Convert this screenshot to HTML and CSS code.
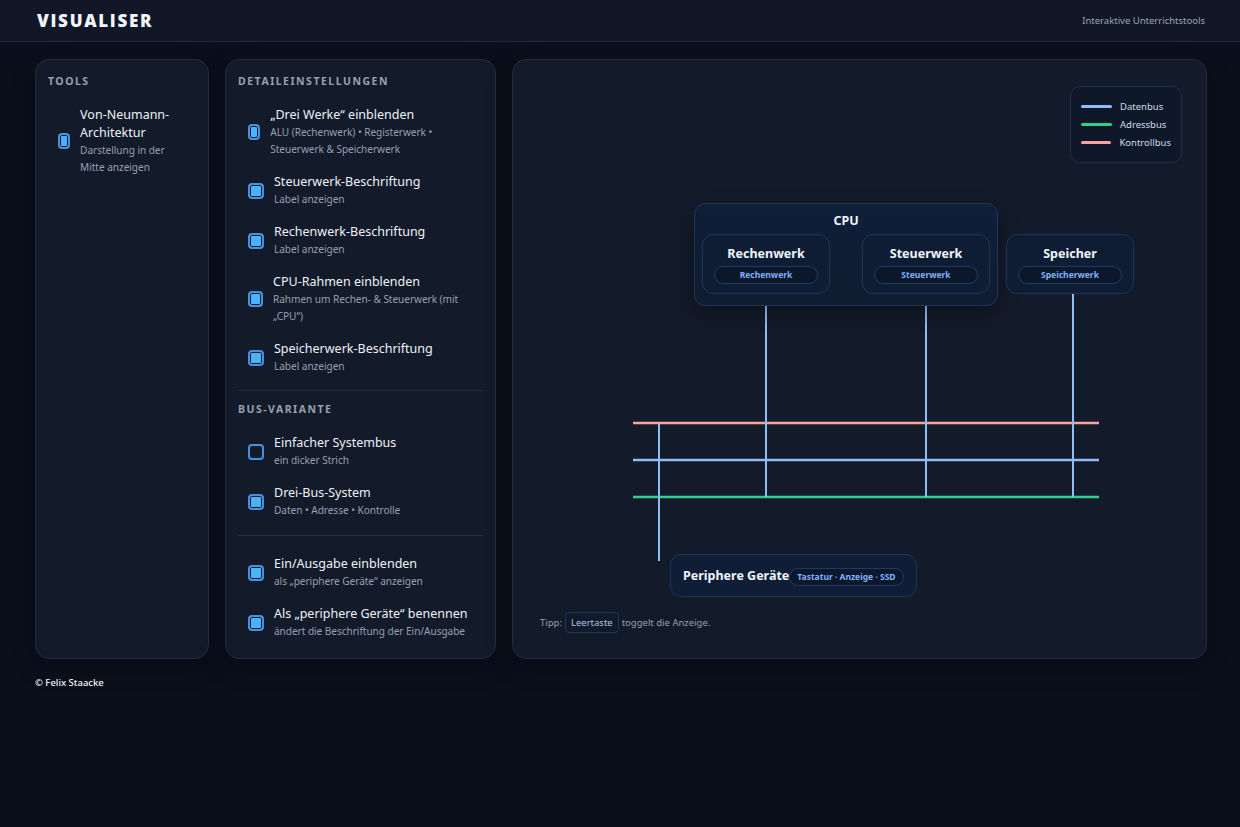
FILE: index.html
```html
<!DOCTYPE html>
<html lang="de">
<head>
<meta charset="utf-8">
<title>Visualiser</title>
<link rel="stylesheet" href="styles.css">
</head>
<body>
<header class="topbar">
  <div class="brand">VISUALISER</div>
  <div class="tagline">Interaktive Unterrichtstools</div>
</header>
<main class="layout">
  <section class="panel">
    <h2 class="panel-heading">Tools</h2>
    <label class="opt">
      <input type="checkbox" class="box" checked>
      <span class="opt-text"><span class="opt-title">Von-Neumann-Architektur</span><span class="opt-desc">Darstellung in der Mitte anzeigen</span></span>
    </label>
  </section>

  <section class="panel">
    <h2 class="panel-heading">Detaileinstellungen</h2>
    <label class="opt">
      <input type="checkbox" class="box" checked>
      <span class="opt-text"><span class="opt-title">„Drei Werke“ einblenden</span><span class="opt-desc">ALU (Rechenwerk) • Registerwerk • Steuerwerk &amp; Speicherwerk</span></span>
    </label>
    <label class="opt">
      <input type="checkbox" class="box" checked>
      <span class="opt-text"><span class="opt-title">Steuerwerk-Beschriftung</span><span class="opt-desc">Label anzeigen</span></span>
    </label>
    <label class="opt">
      <input type="checkbox" class="box" checked>
      <span class="opt-text"><span class="opt-title">Rechenwerk-Beschriftung</span><span class="opt-desc">Label anzeigen</span></span>
    </label>
    <label class="opt">
      <input type="checkbox" class="box" checked>
      <span class="opt-text"><span class="opt-title">CPU-Rahmen einblenden</span><span class="opt-desc">Rahmen um Rechen- &amp; Steuerwerk (mit „CPU“)</span></span>
    </label>
    <label class="opt">
      <input type="checkbox" class="box" checked>
      <span class="opt-text"><span class="opt-title">Speicherwerk-Beschriftung</span><span class="opt-desc">Label anzeigen</span></span>
    </label>

    <hr class="divider">
    <h2 class="panel-heading">Bus-Variante</h2>
    <label class="opt">
      <input type="checkbox" class="box">
      <span class="opt-text"><span class="opt-title">Einfacher Systembus</span><span class="opt-desc">ein dicker Strich</span></span>
    </label>
    <label class="opt">
      <input type="checkbox" class="box" checked>
      <span class="opt-text"><span class="opt-title">Drei-Bus-System</span><span class="opt-desc">Daten • Adresse • Kontrolle</span></span>
    </label>

    <hr class="divider divider-tight">
    <label class="opt">
      <input type="checkbox" class="box" checked>
      <span class="opt-text"><span class="opt-title">Ein/Ausgabe einblenden</span><span class="opt-desc">als „periphere Geräte“ anzeigen</span></span>
    </label>
    <label class="opt">
      <input type="checkbox" class="box" checked>
      <span class="opt-text"><span class="opt-title">Als „periphere Geräte“ benennen</span><span class="opt-desc">ändert die Beschriftung der Ein/Ausgabe</span></span>
    </label>
  </section>

  <section class="panel stage-panel">
    <div class="stage">
      <svg class="wires" width="693" height="520" viewBox="0 0 693 520">
        <g stroke-width="2.5" stroke-linecap="butt">
          <line x1="120" y1="363" x2="586" y2="363" stroke="#f7a3a3"/>
          <line x1="120" y1="400" x2="586" y2="400" stroke="#90bdf5"/>
          <line x1="120" y1="437" x2="586" y2="437" stroke="#2fcf8f"/>
        </g>
        <g stroke="#90bdf5" stroke-width="2">
          <line x1="253" y1="245" x2="253" y2="437"/>
          <line x1="413" y1="245" x2="413" y2="437"/>
          <line x1="560" y1="233" x2="560" y2="437"/>
          <line x1="146" y1="364" x2="146" y2="501"/>
        </g>
      </svg>

      <div class="legend">
        <div class="legend-row"><span class="swatch sw-data"></span>Datenbus</div>
        <div class="legend-row"><span class="swatch sw-addr"></span>Adressbus</div>
        <div class="legend-row"><span class="swatch sw-ctrl"></span>Kontrollbus</div>
      </div>

      <div class="node cpu">
        <div class="cpu-label">CPU</div>
      </div>
      <div class="node unit unit-alu">
        <div class="unit-title">Rechenwerk</div>
        <div class="pill">Rechenwerk</div>
      </div>
      <div class="node unit unit-cu">
        <div class="unit-title">Steuerwerk</div>
        <div class="pill">Steuerwerk</div>
      </div>
      <div class="node unit unit-mem">
        <div class="unit-title">Speicher</div>
        <div class="pill">Speicherwerk</div>
      </div>
      <div class="node periph">
        <span class="periph-title">Periphere Geräte</span>
        <span class="pill pill-inline">Tastatur · Anzeige · SSD</span>
      </div>
    </div>
    <p class="tip">Tipp: <kbd class="key">Leertaste</kbd> toggelt die Anzeige.</p>
  </section>
</main>
<footer class="footer">© Felix Staacke</footer>
</body>
</html>
```

FILE: styles.css
```css
* { box-sizing: border-box; }
html, body { margin: 0; padding: 0; }
body {
  background: #0b0f1b;
  color: #e5e9f2;
  font-family: "Noto Sans", "Open Sans", "Liberation Sans", sans-serif;
  min-height: 827px;
}

.topbar {
  height: 42px;
  display: flex;
  align-items: center;
  justify-content: space-between;
  padding: 0 35px 0 37px;
  background: #111727;
  border-bottom: 1px solid #1f2a3d;
}
.brand {
  font-family: "Open Sans", "Noto Sans", sans-serif;
  font-weight: 800;
  font-size: 17px;
  letter-spacing: 1.7px;
  color: #f1f4fa;
}
.tagline {
  font-size: 9.5px;
  color: #9aa6b8;
}

.layout {
  display: grid;
  grid-template-columns: 174px 271px 1fr;
  grid-template-rows: 600px;
  gap: 16px;
  padding: 17px 33px 0 35px;
}

.panel {
  background: #131a29;
  border: 1px solid #212c40;
  border-radius: 14px;
  padding: 14px 12px 13px 12px;
  display: flex;
  flex-direction: column;
  box-shadow: 0 8px 24px rgba(0,0,0,0.25);
  overflow: hidden;
}

.panel-heading {
  margin: 0 0 10px 0;
  font-size: 10.5px;
  line-height: 14px;
  font-weight: 700;
  letter-spacing: 1.5px;
  text-transform: uppercase;
  color: #97a1b1;
}

.opt {
  display: flex;
  align-items: center;
  gap: 10px;
  padding: 8px 10px 7px 10px;
  cursor: pointer;
}
.box {
  appearance: none;
  -webkit-appearance: none;
  margin: 0;
  width: 16px;
  height: 16px;
  border: 2px solid #4a90e0;
  border-radius: 4px;
  background: transparent;
  flex: 0 1 16px;
  min-width: 11px;
}
.box:checked {
  background: #4ab3ff;
  box-shadow: inset 0 0 0 1px #131a29;
}
.opt-text {
  display: flex;
  flex-direction: column;
  min-width: 0;
}
.opt-title {
  font-size: 12.5px;
  line-height: 18px;
  color: #eef2f8;
}
.opt-desc {
  font-size: 10.1px;
  line-height: 17px;
  color: #95a0b3;
  letter-spacing: -0.05px;
}

.divider {
  border: 0;
  border-top: 1px solid #222d42;
  margin: 8px 0 11px 0;
  height: 0;
}
.divider-tight { margin: 9px 0 11px 0; }

.stage-panel {
  padding: 0 0 25px 27px;
  position: relative;
}
.stage {
  position: relative;
  height: 540px;
  flex: 0 0 auto;
  margin-left: -27px;
}
.wires {
  position: absolute;
  left: 0;
  top: 0;
}

.legend {
  position: absolute;
  left: 557px;
  top: 26px;
  width: 112px;
  height: 77px;
  padding: 11px 10px;
  background: #0e1829;
  border: 1px solid #1d3050;
  border-radius: 10px;
  display: flex;
  flex-direction: column;
  gap: 1px;
}
.legend-row {
  display: flex;
  align-items: center;
  gap: 8px;
  font-size: 9.5px;
  line-height: 17px;
  color: #cfdaee;
}
.swatch {
  width: 31px;
  height: 3px;
  border-radius: 2px;
}
.sw-data { background: #90bdf5; }
.sw-addr { background: #2fcf8f; }
.sw-ctrl { background: #f7a3a3; }

.node {
  position: absolute;
  border: 1px solid #1c3556;
  border-radius: 11px;
}
.cpu {
  left: 181px;
  top: 143px;
  width: 304px;
  height: 103px;
  background: linear-gradient(180deg, #0f1f38 0%, #0f1c31 100%);
  box-shadow: 0 8px 20px rgba(0,0,0,0.3);
}
.cpu-label {
  text-align: center;
  font-weight: 700;
  font-size: 12.5px;
  line-height: 16px;
  margin-top: 9px;
  color: #f0f4fb;
}
.unit {
  top: 174px;
  width: 128px;
  height: 60px;
  background: #0f1d34;
  display: flex;
  flex-direction: column;
  align-items: center;
  padding-top: 10px;
}
.unit-alu { left: 189px; }
.unit-cu { left: 349px; }
.unit-mem { left: 493px; }
.unit-title {
  font-weight: 700;
  font-size: 12.5px;
  line-height: 17px;
  color: #f0f4fb;
  margin-bottom: 4px;
}
.pill {
  width: 104px;
  height: 18px;
  border: 1px solid #1f3b60;
  border-radius: 9px;
  background: #0c172b;
  color: #7fb2ff;
  font-weight: 700;
  font-size: 8.5px;
  line-height: 16px;
  text-align: center;
}
.periph {
  left: 157px;
  top: 494px;
  width: 247px;
  height: 43px;
  background: #0f1e36;
  display: flex;
  align-items: center;
  padding-left: 12px;
  gap: 0;
}
.periph-title {
  font-weight: 700;
  font-size: 12.5px;
  color: #f0f4fb;
}
.pill-inline {
  width: auto;
  padding: 0 7px;
  margin-top: 2px;
}

.tip {
  margin: auto 0 0 0;
  font-size: 9.5px;
  color: #95a0b3;
  display: flex;
  align-items: center;
  gap: 3px;
}
.key {
  font-family: inherit;
  font-size: 9.5px;
  color: #b8c3d6;
  background: #0f1a2c;
  border: 1px solid #213553;
  border-radius: 4px;
  padding: 3px 5px;
  line-height: 13px;
}

.footer {
  padding: 17px 35px;
  font-size: 9.5px;
  font-weight: 500;
  color: #f1f4fa;
}
```
